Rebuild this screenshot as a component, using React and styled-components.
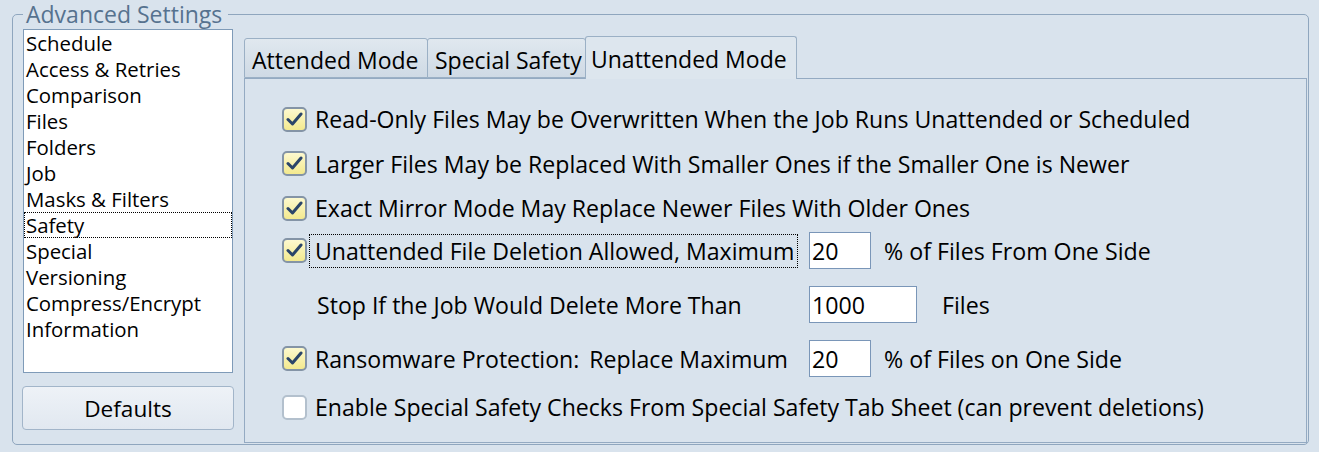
import styled, { createGlobalStyle } from "styled-components"

const GlobalStyle = createGlobalStyle`
  body {
    margin: 0;
    background: #d9e3ed;
    font-family: "Open Sans", "Noto Sans", sans-serif;
    color: #000;
  }
`

const Page = styled.div`
  width: 1319px;
  height: 452px;
  box-sizing: border-box;
  padding: 0 10px 0 12px;
`

const Group = styled.fieldset`
  margin: 0;
  height: 445px;
  box-sizing: border-box;
  border: 1px solid #8fa6be;
  border-radius: 5px;
  padding: 1px 1px 1px 10px;
`

const Legend = styled.legend`
  font-size: 23px;
  line-height: 28px;
  color: #56728f;
  padding: 0 6px 0 3px;
`

const Body = styled.div`
  display: grid;
  grid-template-columns: 210px 1fr;
  column-gap: 11px;
  height: 100%;
`

const Side = styled.div`
  display: flex;
  flex-direction: column;
`

const List = styled.div`
  width: 210px;
  height: 344px;
  box-sizing: border-box;
  border: 1px solid #7f9bb8;
  background: #fff;
`

const Item = styled.div`
  height: 26px;
  box-sizing: border-box;
  line-height: 25px;
  font-size: 20.4px;
  padding-left: 1px;
  border: 1px dotted ${(p) => (p.$focused ? "#000" : "transparent")};
  white-space: nowrap;
`

const Button = styled.button`
  width: 212px;
  height: 44px;
  margin: 13px 0 0 -1px;
  border: 1px solid #a2b5c9;
  border-radius: 4px;
  background: linear-gradient(#eef2f7, #e1e8f0);
  font-family: inherit;
  font-size: 22.6px;
  color: #000;
`

const Main = styled.div`
  display: flex;
  flex-direction: column;
  min-height: 0;
`

const TabStrip = styled.div`
  height: 49px;
  display: flex;
  align-items: flex-end;
`

const Tab = styled.div`
  width: ${(p) => p.$width}px;
  height: ${(p) => (p.$active ? 43 : 40)}px;
  margin-left: ${(p) => (p.$first ? 0 : -1)}px;
  margin-bottom: ${(p) => (p.$active ? -1 : 0)}px;
  position: relative;
  z-index: ${(p) => (p.$active ? 1 : 0)};
  box-sizing: border-box;
  border: 1px solid #9bb0c5;
  border-bottom: ${(p) => (p.$active ? "none" : "1px solid #9bb0c5")};
  border-radius: 3px 3px 0 0;
  background: ${(p) => (p.$active ? "#dde6ee" : "linear-gradient(#e0e8ef, #cfdae5)")};
  font-size: 23px;
  line-height: ${(p) => (p.$active ? 44 : 42)}px;
  padding-left: ${(p) => (p.$active ? 5 : 7)}px;
  white-space: nowrap;
`

const Panel = styled.div`
  flex: 1;
  border: 1px solid #94aac2;
  background: #d9e3ed;
  padding: 18px 0 0 37px;
  display: grid;
  grid-template-columns: 28px 499px auto;
  grid-template-rows: 44px 45px 44px 41px 67px 41px 56px;
  align-items: center;
  align-content: start;
`

const Box = styled.span`
  width: 25px;
  height: 25px;
  box-sizing: border-box;
  border-radius: 5px;
  border: 2px solid ${(p) => (p.$checked ? "#8494a6" : "#b3c0cd")};
  background: ${(p) => (p.$checked ? "linear-gradient(#fdf9cf, #f3e98e)" : "#fff")};
  display: flex;
  align-items: center;
  justify-content: center;
`

const Label = styled.span`
  grid-column: ${(p) => (p.$span ? "2 / 4" : "2")};
  justify-self: start;
  font-size: 23.1px;
  line-height: 32px;
  padding: 0 3px 0 ${(p) => p.$indent || 5}px;
  border: 1px dotted ${(p) => (p.$focused ? "#000" : "transparent")};
  margin-left: -1px;
  white-space: nowrap;
`

const Gap = styled.span`
  margin-left: ${(p) => p.$size}px;
`

const Field = styled.div`
  display: flex;
  align-items: center;
  gap: ${(p) => p.$gap}px;
  font-size: 23.2px;
  white-space: nowrap;
`

const Input = styled.input`
  width: ${(p) => p.$width}px;
  height: 37px;
  box-sizing: border-box;
  border: 1px solid #7a96b8;
  background: #fff;
  font-family: inherit;
  font-size: 23.2px;
  padding: 0 2px;
  color: #000;
  outline: none;
`

function Check({ checked }) {
  return (
    <Box $checked={checked}>
      {checked && (
        <svg width="17" height="15" viewBox="0 0 17 15">
          <path d="M2 7.5 L6.5 12 L15 2" fill="none" stroke="#2b4569" strokeWidth="3" strokeLinejoin="round" strokeLinecap="round" />
        </svg>
      )}
    </Box>
  )
}

const pages = ["Schedule", "Access & Retries", "Comparison", "Files", "Folders", "Job", "Masks & Filters", "Safety", "Special", "Versioning", "Compress/Encrypt", "Information"]

export default function App() {
  return (
    <>
      <GlobalStyle />
      <Page>
        <Group>
          <Legend>Advanced Settings</Legend>
          <Body>
            <Side>
              <List>
                {pages.map((p) => (
                  <Item key={p} $focused={p === "Safety"}>{p}</Item>
                ))}
              </List>
              <Button>Defaults</Button>
            </Side>
            <Main>
              <TabStrip>
                <Tab $first $width={184}>Attended Mode</Tab>
                <Tab $width={159}>Special Safety</Tab>
                <Tab $active $width={212}>Unattended Mode</Tab>
              </TabStrip>
              <Panel>
                <Check checked />
                <Label $span>Read-Only Files May be Overwritten When the Job Runs Unattended or Scheduled</Label>
                <Check checked />
                <Label $span>Larger Files May be Replaced With Smaller Ones if the Smaller One is Newer</Label>
                <Check checked />
                <Label $span>Exact Mirror Mode May Replace Newer Files With Older Ones</Label>
                <Check checked />
                <Label $focused>Unattended File Deletion Allowed, Maximum</Label>
                <Field $gap={13}>
                  <Input $width={62} defaultValue="20" />
                  % of Files From One Side
                </Field>
                <span />
                <Label $indent={7}>Stop If the Job Would Delete More Than</Label>
                <Field $gap={25}>
                  <Input $width={108} defaultValue="1000" />
                  Files
                </Field>
                <Check checked />
                <Label>Ransomware Protection:<Gap $size={10}>Replace Maximum</Gap></Label>
                <Field $gap={13}>
                  <Input $width={62} defaultValue="20" />
                  % of Files on One Side
                </Field>
                <Check />
                <Label $span>Enable Special Safety Checks From Special Safety Tab Sheet (can prevent deletions)</Label>
              </Panel>
            </Main>
          </Body>
        </Group>
      </Page>
    </>
  )
}
